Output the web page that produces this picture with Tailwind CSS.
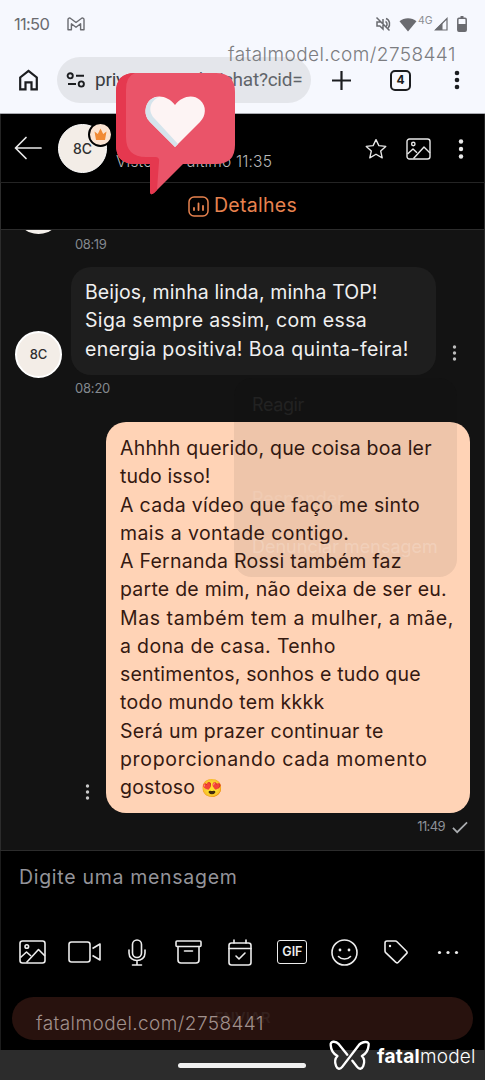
<!DOCTYPE html>
<html lang="pt-BR">
<head>
<meta charset="utf-8">
<title>Chat</title>
<script src="https://cdn.jsdelivr.net/npm/@tailwindcss/browser@4"></script>
</head>
<body class="relative w-[485px] h-[1080px] overflow-hidden bg-black font-['Inter','Liberation_Sans',sans-serif] flex flex-col whitespace-nowrap">

<!-- Browser chrome -->
<div class="h-[114px] shrink-0 bg-[#f6f8fe] border-b border-[#a9abb1]">
  <div class="h-[48px] flex items-center pl-[14px] pr-[18px] text-[#6a6b70]">
    <span class="w-[53px] text-[16.5px] tracking-[-0.7px]">11:50</span>
    <svg class="w-[18px] h-[14px]" viewBox="0 0 18 14" fill="none" stroke="currentColor" stroke-width="1.4" stroke-linejoin="round"><path d="M1 12.800V2.500C1 1 2.800.700 3.700 1.500L9 5.500l5.300-4C15.200.700 17 1 17 2.500v10.300h-3.400V6.800L9 10.300 4.400 6.800v6z"/></svg>
    <div class="ml-auto flex items-center">
      <svg class="w-[16px] h-[16px]" viewBox="0 0 16 16" fill="none" stroke="currentColor" stroke-width="1.500"><path d="M1.500 1.500l13 13M8 3v10L4.800 10H2V6h4M10.500 5.500c2 1 2 4 .5 5M11 2.500c4 1.500 4.500 6.500 2.200 9.500"/></svg>
      <svg class="ml-[8px] w-[18px] h-[15px]" viewBox="0 0 18 15" fill="currentColor"><path d="M9 14.500L.5 4.300C5 .300 13 .300 17.500 4.300z"/></svg>
      <span class="ml-[1px] w-[15px] text-[10.500px] leading-[10px] -mt-[7px] text-[#8c8d92]">4G</span>
      <svg class="ml-[1px] w-[14px] h-[14px]" viewBox="0 0 14 14"><path d="M13 1.500V13H1.500z" fill="none" stroke="currentColor" stroke-width="1.200"/><path d="M8.500 5.500V13H1z" fill="currentColor"/></svg>
      <svg class="ml-[9px] w-[10px] h-[16px]" viewBox="0 0 10 16"><path d="M3.500 0h3v2h-3z" fill="currentColor"/><rect x=".8" y="2.200" width="8.400" height="13" rx="1.200" fill="none" stroke="currentColor" stroke-width="1.500"/><path d="M1 8h8v7H1z" fill="currentColor"/></svg>
    </div>
  </div>
  <div class="h-[65px] flex items-center pl-[18px] text-[#1b1d20]">
    <svg class="-mt-[2px] w-[21px] h-[22px]" viewBox="0 0 21 22" fill="none" stroke="currentColor" stroke-width="2.200"><path d="M2.200 20.300V8.500L10.500 2l8.300 6.500v11.800h-5.300v-7h-6v7z"/></svg>
    <div class="ml-[18px] -mt-[1px] w-[254px] h-[46px] rounded-full bg-[#e4e6eb] flex items-center pl-[9px]">
      <svg class="w-[20px] h-[16px] shrink-0" viewBox="0 0 20 16" fill="none" stroke="currentColor" stroke-width="1.900"><circle cx="4.200" cy="3.800" r="2.600"/><path d="M10 3.800h8M2 12h8"/><circle cx="15.300" cy="12" r="2.600"/></svg>
      <span class="ml-[9px] mt-[1px] font-['Roboto',sans-serif] text-[19px] tracking-[-0.24px] text-[#3a3d41]">priv<span class="text-[#606469]">acy.com.br/chat?cid=</span></span>
    </div>
    <svg class="ml-[21px] -mt-[1px] w-[19px] h-[19px]" viewBox="0 0 19 19" stroke="currentColor" stroke-width="2.200"><path d="M9.500 0v19M0 9.500h19"/></svg>
    <div class="ml-[39px] -mt-[1px] w-[21px] h-[21px] rounded-[5px] border-2 border-current flex items-center justify-center text-[12px] font-bold">4</div>
    <svg class="ml-[43px] -mt-[1px] w-[6px] h-[20px]" viewBox="0 0 6 20" fill="currentColor"><circle cx="3" cy="3" r="2.300"/><circle cx="3" cy="10" r="2.300"/><circle cx="3" cy="17" r="2.300"/></svg>
  </div>
</div>

<!-- Conversation header -->
<div class="h-[69px] shrink-0 border-b border-x border-[#242424] flex items-center pl-[13px] pr-[20px] text-[#e9e9e9]">
  <svg class="w-[28px] h-[24px]" viewBox="0 0 28 24" fill="none" stroke="currentColor" stroke-width="1.700" stroke-linecap="round" stroke-linejoin="round"><path d="M27 12H1.500M12 1.500L1.500 12 12 22.500"/></svg>
  <div class="relative ml-[16px] w-[49px] h-[49px] rounded-full bg-[#f3ede7] border border-white flex items-center justify-center text-[14px] font-medium text-[#303030]">8C
    <div class="absolute left-[29px] -top-[3px] w-[25px] h-[25px] rounded-full bg-[#fbe3d1] border-2 border-black flex items-center justify-center">
      <svg class="w-[13px] h-[13px]" viewBox="0 0 13 13" fill="#f18a35"><path d="M2 12L.5 3.500l3.300 2.600L6.500.500l2.700 5.600 3.300-2.600L11 12z"/></svg>
    </div>
  </div>
  <div class="ml-[9px] mt-[27px] w-[170px] text-[15.500px] tracking-[0.18px] font-light text-[#b9b9b9]">Visto por último 11:35</div>
  <svg class="ml-auto mt-[2px] w-[22px] h-[22px]" viewBox="0 0 23 22" fill="none" stroke="currentColor" stroke-width="1.400" stroke-linejoin="round"><path d="M11.500 1.200l3 6.300 7.200.800-5.300 4.800 1.600 7.100-6.500-3.700L5 20.200l1.600-7.100L1.300 8.300l7.200-.800z"/></svg>
  <svg class="ml-[19px] mt-[2px] w-[25px] h-[22px]" viewBox="0 0 25 22" fill="none" stroke="currentColor" stroke-width="1.400" stroke-linejoin="round"><rect x="1" y="1" width="23" height="20" rx="2.500"/><circle cx="7.300" cy="6" r="1.700"/><path d="M1.500 16L7 11l4 3.800M7.500 20.500L18 9l6 6"/></svg>
  <svg class="ml-[27px] mt-[2px] w-[6px] h-[20px]" viewBox="0 0 6 20" fill="currentColor"><circle cx="3" cy="2.500" r="2.200"/><circle cx="3" cy="10" r="2.200"/><circle cx="3" cy="17.500" r="2.200"/></svg>
</div>
<div class="h-[47px] shrink-0 border-b border-x border-[#2c2c2c] flex items-center justify-center gap-[5px] text-[#e8834f]">
  <svg class="w-[21px] h-[21px]" viewBox="0 0 21 21" fill="none" stroke="currentColor" stroke-width="1.500" stroke-linecap="round"><rect x="1" y="1" width="19" height="19" rx="5"/><path d="M6 14v-2M10.500 14V7.500M15 14v-4" stroke-width="1.800"/></svg>
  <span class="text-[19.500px] -mt-[1px] tracking-[0.28px]">Detalhes</span>
</div>

<!-- Messages -->
<div class="relative h-[621px] shrink-0 overflow-hidden bg-[#131313] border-b border-x border-[#2c2c2c] flex flex-col">
  <div class="shrink-0 -mt-[43px] ml-[14px] w-[47px] h-[47px] rounded-full bg-[#f5f1ec]"></div>
  <div class="ml-[74px] mt-[2px] h-[16px] text-[13px] leading-[16px] tracking-[-0.4px] text-[#84898f]">08:19</div>
  <div class="mt-[15px] ml-[14px] flex h-[108px]">
    <div class="mt-[64px] w-[47px] h-[47px] rounded-full bg-[#f3ede7] border-2 border-white flex items-center justify-center text-[13px] font-medium text-[#303030]">8C</div>
    <div class="ml-[9px] w-[365px] h-[108px] rounded-[20px] bg-[#1e1e1e] pl-[14px] pt-[11px] text-[19.500px] leading-[28.250px] text-[#f0f0f0]">
      <div class="tracking-[0.11px]">Beijos, minha linda, minha TOP!</div>
      <div class="tracking-[0.34px]">Siga sempre assim, com essa</div>
      <div class="tracking-[0.37px]">energia positiva! Boa quinta-feira!</div>
    </div>
    <svg class="ml-[16px] mt-[78px] w-[5px] h-[16px]" viewBox="0 0 5 16" fill="#bdbdbd"><circle cx="2.500" cy="2" r="1.700"/><circle cx="2.500" cy="8" r="1.700"/><circle cx="2.500" cy="14" r="1.700"/></svg>
  </div>
  <div class="ml-[74px] mt-[5px] h-[16px] text-[13px] leading-[16px] tracking-[-0.2px] text-[#84898f]">08:20</div>
  <div class="mt-[26px] ml-[84px] flex h-[391px]">
    <svg class="mt-[362px] w-[5px] h-[16px]" viewBox="0 0 5 16" fill="#c9c9c9"><circle cx="2.500" cy="2" r="1.700"/><circle cx="2.500" cy="8" r="1.700"/><circle cx="2.500" cy="14" r="1.700"/></svg>
    <div class="ml-[16px] w-[364px] h-[391px] rounded-[20px] bg-[#ffd3b6] pl-[14px] pt-[12px] text-[19.500px] leading-[28.250px] text-[#351911]">
      <div class="tracking-[0.20px]">Ahhhh querido, que coisa boa ler</div>
      <div class="tracking-[0.07px]">tudo isso!</div>
      <div class="tracking-[0.31px]">A cada vídeo que faço me sinto</div>
      <div class="tracking-[0.42px]">mais a vontade contigo.</div>
      <div class="tracking-[0.26px]">A Fernanda Rossi também faz</div>
      <div class="tracking-[0.23px]">parte de mim, não deixa de ser eu.</div>
      <div class="tracking-[0.57px]">Mas também tem a mulher, a mãe,</div>
      <div class="tracking-[0.34px]">a dona de casa. Tenho</div>
      <div class="tracking-[0.20px]">sentimentos, sonhos e tudo que</div>
      <div class="tracking-[0.28px]">todo mundo tem kkkk</div>
      <div class="tracking-[0.26px]">Será um prazer continuar te</div>
      <div class="tracking-[0.68px]">proporcionando cada momento</div>
      <div class="tracking-[0.20px] h-[28px]">gostoso <span class="text-[17.500px] tracking-normal">😍</span></div>
    </div>
  </div>
  <div class="mt-[5px] pr-[16px] h-[18px] flex items-center justify-end text-[#8d9197]">
    <span class="text-[13px] tracking-[-0.6px]">11:49</span>
    <svg class="ml-[7px] w-[16px] h-[13px]" viewBox="0 0 17 13" fill="none" stroke="#aaadb0" stroke-width="1.800"><path d="M1 7l4.500 4.500L16 1"/></svg>
  </div>

  <!-- Fading context menu -->
  <div class="absolute left-[233px] top-[148px] w-[223px] h-[199px] rounded-[18px] bg-[#0c0c0c]/[0.07] pl-[18px] text-[18px] leading-[24px]">
    <div class="mt-[15px] text-[#222222] tracking-[-0.4px]">Reagir</div>
    <div class="mt-[70px] text-white/10">Responder</div>
    <div class="mt-[24px] text-white/20">Denunciar mensagem</div>
  </div>
</div>

<!-- Composer -->
<div class="h-[199px] shrink-0 border-x border-[#1c1c1c] flex flex-col text-[#ededed]">
  <div class="mt-[13px] ml-[18px] h-[26px] text-[19.500px] leading-[26px] tracking-[0.7px] text-[#94949a]">Digite uma mensagem</div>
  <div class="mt-[48px] ml-[6px] w-[467px] h-[28px] grid grid-cols-9 items-center justify-items-center">
    <svg class="w-[27px] h-[24px]" viewBox="0 0 27 24" fill="none" stroke="currentColor" stroke-width="1.600" stroke-linejoin="round"><rect x="1" y="1" width="25" height="22" rx="2.500"/><circle cx="7.800" cy="6.500" r="1.800"/><path d="M1.500 17.500L7.500 12l4.500 4M7.500 22.500L19.500 9.500l6.500 6.500"/></svg>
    <svg class="w-[33px] h-[22px]" viewBox="0 0 33 22" fill="none" stroke="currentColor" stroke-width="1.600" stroke-linejoin="round"><rect x="1" y="1" width="21" height="20" rx="2.500"/><path d="M24.500 7.500L32 3v16l-7.500-4.500"/></svg>
    <svg class="w-[18px] h-[27px]" viewBox="0 0 18 27" fill="none" stroke="currentColor" stroke-width="1.600" stroke-linecap="round"><rect x="4.500" y="1" width="9" height="17.500" rx="4.500"/><path d="M1 11v3c0 10 16 10 16 0v-3M9 21.500V26M4.500 26h9"/></svg>
    <svg class="w-[27px] h-[24px]" viewBox="0 0 27 24" fill="none" stroke="currentColor" stroke-width="1.600" stroke-linecap="round" stroke-linejoin="round"><rect x="1" y="1" width="25" height="5.500" rx="1"/><path d="M3 6.500V20c0 2 1 3 3 3h15c2 0 3-1 3-3V6.500M9.500 11h8"/></svg>
    <svg class="w-[24px] h-[27px]" viewBox="0 0 24 27" fill="none" stroke="currentColor" stroke-width="1.600" stroke-linecap="round" stroke-linejoin="round"><rect x="1" y="4" width="22" height="22" rx="2.500"/><path d="M1 9.500h22M6 1v3M18 1v3M8 17l3 3 6-6"/></svg>
    <div class="w-[30px] h-[24px] rounded-[3px] border-[1.500px] border-current flex items-center justify-center text-[12.500px] font-semibold">GIF</div>
    <svg class="w-[27px] h-[27px]" viewBox="0 0 27 27" fill="none" stroke="currentColor" stroke-width="1.600" stroke-linecap="round"><circle cx="13.500" cy="13.500" r="12.500"/><path d="M7.500 17.500c3 3.300 9 3.300 12 0"/><g fill="currentColor" stroke="none"><circle cx="9" cy="11" r="1.400"/><circle cx="18" cy="11" r="1.400"/></g></svg>
    <svg class="w-[24px] h-[24px]" viewBox="0 0 24 24" fill="none" stroke="currentColor" stroke-width="1.600" stroke-linejoin="round"><path d="M1 3c0-1.200.800-2 2-2h8.500c.600 0 1 .200 1.500.700l9.500 9.500c.800.800.800 1.600 0 2.400l-8.200 8.700c-.800.800-1.600.800-2.400 0L1.700 12.600C1.200 12.100 1 11.600 1 11z"/><circle cx="6" cy="6" r="1.200" fill="currentColor" stroke="none"/></svg>
    <svg class="w-[22px] h-[5px]" viewBox="0 0 22 5" fill="currentColor"><circle cx="2.500" cy="2.500" r="1.600"/><circle cx="11" cy="2.500" r="1.600"/><circle cx="19.500" cy="2.500" r="1.600"/></svg>
  </div>
  <div class="mt-[31px] ml-[11px] w-[461px] h-[43px] rounded-full bg-[#28120e] flex items-center justify-center text-[15px] font-semibold text-[#33201d]">ENVIAR</div>
</div>

<!-- System navigation bar -->
<div class="h-[30px] shrink-0 bg-[#2c2c2c] flex items-center pl-[178px]">
  <div class="w-[128px] h-[5px] rounded-full bg-[#f0f0f0] mt-[1px]"></div>
</div>

<!-- Watermarks -->
<div class="absolute left-[228px] top-[43px] text-[19px] leading-[24px] tracking-[0.42px] font-light text-[#7c7d81]">fatalmodel.com/2758441</div>
<div class="absolute left-[36px] top-[1012px] text-[19px] leading-[24px] tracking-[0.42px] font-light text-[#a0908c]">fatalmodel.com/2758441</div>
<div class="absolute left-[329px] top-[1040px] flex items-center text-white">
  <svg class="w-[42px] h-[31px]" viewBox="-1 -1 124 91" fill="none" stroke="currentColor" stroke-width="7" stroke-linecap="round" stroke-linejoin="round"><path d="M53 42L28 11C18 0 2 2 4 14c1 16 8 26 20 32-10 10-8 20-4 30 4 10 12 10 18 2L84 18C94 2 120 0 116 14c-1 16-8 26-20 32 10 10 8 20 4 30-4 10-12 10-18 2L68 60"/></svg>
  <span class="ml-[6px] mt-[2px] text-[19px] leading-[24px] font-bold tracking-[0.3px]">fatal</span><span class="mt-[2px] text-[19px] leading-[24px] font-light tracking-[0.2px]">model</span>
</div>

<!-- Heart reaction sticker -->
<svg class="absolute left-[115px] top-[72px] w-[121px] h-[124px]" viewBox="115 72 121 124">
  <path d="M135 73h81q19 0 19 19v53q0 19-19 19h-33l-29 29q-4 3-4-2v-27h-15q-19 0-19-19V92q0-19 19-19z" fill="#ea5469"/>
  <path d="M135 73q-9 3-9 17v47q0 20 20 20h9q5 0 4 5l-2 28-3 3q-4 3-4-2v-27h-15q-19 0-19-19V92q0-19 19-19z" fill="#e5384f"/>
  <path d="M175 147L150 122C143 115 145 105 150 100c7-6 18-4 25 5 7-9 18-11 25-5 7 6 6 16 0 22z" fill="#fdf4f4"/>
  <path d="M175 147L150 122c-7-7-5-17 0-22q4-3 9-3c-9 4-12 14-4 22l23 25z" fill="#d5e4ec"/>
</svg>
</body>
</html>
